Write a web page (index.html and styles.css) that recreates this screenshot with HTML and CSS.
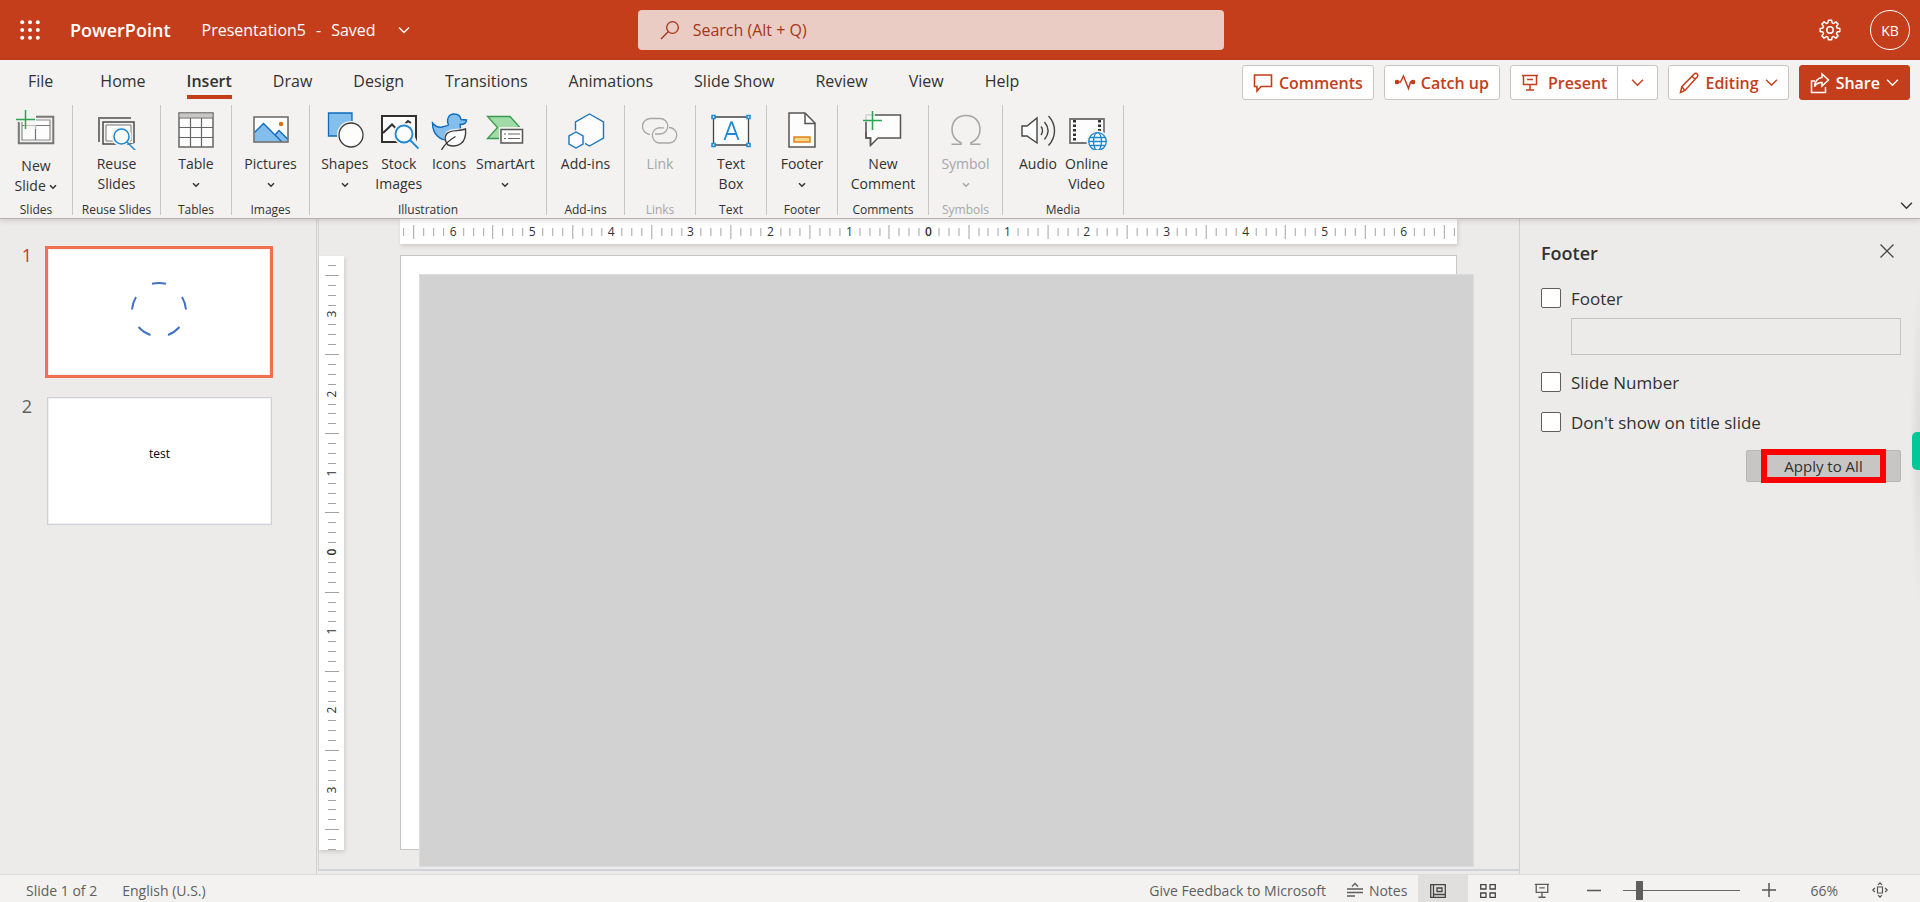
FILE: index.html
```html
<!DOCTYPE html>
<html lang="en">
<head>
<meta charset="utf-8">
<title>Presentation5 - PowerPoint</title>
<link rel="stylesheet" href="styles.css">
</head>
<body>
<svg class="defs" width="0" height="0" aria-hidden="true">
  <symbol id="chevron" viewBox="0 0 12 12"><path d="M1 3.5l5 5 5-5" fill="none" stroke="currentColor" stroke-width="1.3"/></symbol>
  <symbol id="drop" viewBox="0 0 8 8"><path d="M1 2.2l3 3 3-3" fill="none" stroke="currentColor" stroke-width="1.5"/></symbol>
  <symbol id="screen" viewBox="0 0 18 18"><path d="M1 1.5h16M2.5 1.5v9h13v-9M6 5.5h6M9 10.5v5M5 16h8" fill="none" stroke="currentColor" stroke-width="1.5"/></symbol>
</svg>

<header class="titlebar">
  <div class="title-left">
    <button class="launcher" aria-label="App launcher">
      <svg width="20" height="20" viewBox="0 0 20 20" fill="#fff"><circle cx="2.2" cy="2.2" r="2"/><circle cx="10" cy="2.2" r="2"/><circle cx="17.8" cy="2.2" r="2"/><circle cx="2.2" cy="10" r="2"/><circle cx="10" cy="10" r="2"/><circle cx="17.8" cy="10" r="2"/><circle cx="2.2" cy="17.8" r="2"/><circle cx="10" cy="17.8" r="2"/><circle cx="17.8" cy="17.8" r="2"/></svg>
    </button>
    <a class="brand" href="#">PowerPoint</a>
    <button class="docname"><span>Presentation5</span><span>-</span><span>Saved</span><svg class="docname-chevron" width="12" height="12"><use href="#chevron"/></svg></button>
  </div>
  <label class="search">
    <svg width="20" height="20" viewBox="0 0 20 20" fill="none" stroke="#a4351a" stroke-width="1.3"><circle cx="12.5" cy="7.5" r="5.8"/><path d="M8.2 11.8L1 19"/></svg>
    <input type="search" placeholder="Search (Alt + Q)" aria-label="Search">
  </label>
  <div class="account">
    <button class="gear" aria-label="Settings">
      <svg width="22" height="22" viewBox="0 0 22 22" fill="none" stroke="#fff" stroke-width="1.5" stroke-linejoin="round"><path d="M9.4 1.2h3.2l.5 2.7 1.5.6 2.3-1.6 2.2 2.2-1.6 2.3.6 1.5 2.7.5v3.2l-2.7.5-.6 1.5 1.6 2.3-2.2 2.2-2.3-1.6-1.5.6-.5 2.7H9.4l-.5-2.7-1.5-.6-2.3 1.6-2.2-2.2 1.6-2.3-.6-1.5-2.7-.5V9.4l2.7-.5.6-1.5-1.6-2.3 2.2-2.2 2.3 1.6 1.5-.6z"/><circle cx="11" cy="11" r="3.2"/></svg>
    </button>
    <button class="avatar">KB</button>
  </div>
</header>

<section class="ribbon">
  <div class="tabrow">
    <nav class="tabs">
      <a class="tab tab-file" href="#">File</a><a class="tab" href="#">Home</a><a class="tab active" href="#">Insert</a><a class="tab" href="#">Draw</a><a class="tab" href="#">Design</a><a class="tab" href="#">Transitions</a><a class="tab" href="#">Animations</a><a class="tab" href="#">Slide Show</a><a class="tab" href="#">Review</a><a class="tab" href="#">View</a><a class="tab" href="#">Help</a>
    </nav>
    <div class="actions">
      <button class="action"><svg width="20" height="20" viewBox="0 0 20 20" fill="none" stroke="currentColor" stroke-width="1.6"><path d="M1.5 2h17v11.500H8l-4 4.500v-4.500H1.500z"/></svg>Comments</button>
      <button class="action"><svg width="20" height="20" viewBox="0 0 20 20" fill="none" stroke="currentColor" stroke-width="1.500"><path d="M2 9h3.500l3-6 5 12.500L15.500 9H18"/><circle cx="2" cy="9" r="1.600" fill="currentColor"/><circle cx="18" cy="9" r="1.600" fill="currentColor"/></svg>Catch up</button>
      <div class="split">
        <button class="action split-main"><svg width="18" height="18"><use href="#screen"/></svg>Present</button>
        <button class="action split-more" aria-label="Present options"><svg width="13" height="13"><use href="#chevron"/></svg></button>
      </div>
      <button class="action"><svg width="20" height="22" viewBox="0 0 20 22" fill="none" stroke="currentColor" stroke-width="1.500"><path d="M1.500 20.500l1.300-5.800L15.200 2c1-1 2.300-.8 3 0s.8 2-.1 3L6 18.500zM13 4.300l3.300 3.200M2.800 14.700L6 18.500"/></svg>Editing<svg width="13" height="13"><use href="#chevron"/></svg></button>
      <button class="action share"><svg width="20" height="22" viewBox="0 0 20 22" fill="none" stroke="currentColor" stroke-width="1.500"><path d="M5 9H1.500v11.500h14V15M12 2l6.500 6L12 14v-3.500c-4 0-6 1.500-7.500 4C5 9 8 6 12 5.500z"/></svg>Share<svg width="13" height="13"><use href="#chevron"/></svg></button>
    </div>
  </div>

  <div class="tools">
    <div class="group w72"><div class="items">
      <button class="tool low"><svg width="40" height="40" viewBox="0 0 40 40" fill="none"><path d="M2.800 12v21.300h34.500V6.800H20" stroke="#767676" stroke-width="2"/><path d="M6 12v18h28V10H20" fill="#fdfdfd" stroke="#8a8a8a" stroke-width="1.200"/><path d="M6 15.500h28M19.500 15.500V30" stroke="#767676" stroke-width="1.200"/><path d="M0 5h20v14H8V9H0z" fill="#f3f2f1" opacity=".6"/><path d="M9.500 0v19M0 9.500h19" stroke="#2ea44f" stroke-width="1.500"/></svg><span>New<br>Slide <svg width="8" height="8"><use href="#drop"/></svg></span></button>
    </div><span class="caption">Slides</span></div>

    <div class="group w89"><div class="items">
      <button class="tool"><svg width="40" height="40" viewBox="0 0 40 40" fill="none"><path d="M2 32V8h32" stroke="#767676" stroke-width="2"/><path d="M6 12h31v22H6z" stroke="#4a4a4a" stroke-width="1.500"/><path d="M9 15h25v16H9z" fill="#fdfdfd" stroke="#767676"/><circle cx="24.500" cy="26.500" r="10" fill="#f3f2f1"/><path d="M28 36l10-3 2 7z" fill="#f3f2f1"/><circle cx="24.500" cy="26.500" r="7.500" fill="#fdfdfd" stroke="#1e88d2" stroke-width="1.500"/><path d="M30 32l8.500 8.500" stroke="#1e88d2" stroke-width="1.500"/></svg><span>Reuse<br>Slides</span></button>
    </div><span class="caption">Reuse Slides</span></div>

    <div class="group w71"><div class="items">
      <button class="tool"><svg width="40" height="40" viewBox="0 0 40 40" fill="none" stroke="#666"><path d="M3 3h34v34H3z" fill="#fdfdfd" stroke-width="1.500"/><path d="M3.500 3.500h33v4h-33z" fill="#c8c6c4" stroke="none"/><path d="M3 8h34M3 17.500h34M3 27.500h34M14.500 8v29M25.500 8v29" stroke-width="1.200"/></svg><span>Table</span><svg class="drop" width="8" height="8"><use href="#drop"/></svg></button>
    </div><span class="caption">Tables</span></div>

    <div class="group w78"><div class="items">
      <button class="tool"><svg width="40" height="40" viewBox="0 0 40 40" fill="none"><path d="M3 7h34v25H3z" fill="#fdfdfd"/><path d="M3.500 22.500L12.500 13.500l18 18h-27z" fill="#83beec"/><path d="M36.500 28v3.500h-6L24 25l4-4.500z" fill="#83beec"/><path d="M3.500 22.500l9-9L30.500 31.500M24 25l4-4.500 8.500 8.500" stroke="#0f6cbd" stroke-width="1.400"/><path d="M3 7h34v25H3z" stroke="#666" stroke-width="1.500"/><circle cx="30" cy="14" r="2.200" fill="#e06c00"/></svg><span>Pictures</span><svg class="drop" width="8" height="8"><use href="#drop"/></svg></button>
    </div><span class="caption">Images</span></div>

    <div class="group w237"><div class="items">
      <button class="tool"><svg width="40" height="40" viewBox="0 0 40 40" fill="none"><path d="M3.500 3h23.500v23H3.500z" fill="#83beec" stroke="#0f6cbd" stroke-width="1.300"/><circle cx="26" cy="25" r="14" fill="#f3f2f1"/><circle cx="26" cy="25" r="12" fill="#fdfdfd" stroke="#3b3a39" stroke-width="1.300"/></svg><span>Shapes</span><svg class="drop" width="8" height="8"><use href="#drop"/></svg></button>
      <button class="tool"><svg width="40" height="40" viewBox="0 0 40 40" fill="none"><path d="M3 6h34v26H3z" fill="#fdfdfd" stroke="#323130" stroke-width="2"/><path d="M4 23l9-8.500 5 5M26 14l3-3 3 2" stroke="#323130" stroke-width="2"/><circle cx="25" cy="24" r="11" fill="#f3f2f1"/><path d="M28 34l8-7 4 9z" fill="#f3f2f1"/><circle cx="25" cy="24" r="8.500" fill="#fdfdfd" stroke="#1e88d2" stroke-width="1.800"/><path d="M31 30l8.500 8.500" stroke="#1e88d2" stroke-width="1.800"/></svg><span>Stock<br>Images</span></button>
      <button class="tool"><svg width="40" height="40" viewBox="0 0 40 40" fill="none"><path d="M3.500 13c3 3.500 6 5 9.500 4 3-1 6-1 6.500-2C17 9 20 4 25 4c4 0 6.500 2 7 5.500l5.500.5c0 3-2 4.500-6.500 4.500 2 9-2 16-11 16-9 0-16.500-6-16.500-17.500z" fill="#83beec" stroke="#0f6cbd" stroke-width="1.400"/><path d="M38 17c-8 3-19 0-22 7-2 4 0 7 1 8l-6 8h6l5-3c10 2 17-4 16-20z" fill="#f3f2f1"/><path d="M36.500 19c-7 3-15 0-19 5-2.500 3.500-1 8 1.500 11 9 3 19-1 17.500-16z" fill="#fdfdfd" stroke="#3b3a39" stroke-width="1.400"/><path d="M12.500 40c3-6 8-10 14-13.500" stroke="#3b3a39" stroke-width="1.400"/></svg><span>Icons</span></button>
      <button class="tool"><svg width="40" height="40" viewBox="0 0 40 40" fill="none"><path d="M2.500 6.500H25l10 11-10 11H2.500l10-11z" fill="#a0dba8" stroke="#3a9a4c" stroke-width="1.300"/><path d="M14 17h26v18H14z" fill="#f3f2f1"/><path d="M16 19.500h21.500v13.500H16z" fill="#fdfdfd" stroke="#555" stroke-width="1.500"/><path d="M19 24h2M23 24h12M19 28.500h2M23 28.500h12" stroke="#666" stroke-width="1.200"/></svg><span>SmartArt</span><svg class="drop" width="8" height="8"><use href="#drop"/></svg></button>
    </div><span class="caption">Illustration</span></div>

    <div class="group w78"><div class="items">
      <button class="tool"><svg width="40" height="40" viewBox="0 0 40 40" fill="#fdfdfd" stroke="#1e73be" stroke-width="1.400"><path d="M23.500 4l14 8v16l-14 8-14-8V12z"/><path d="M10 20l9 5v10l-9 5-9-5V25z" fill="#f3f2f1" stroke="none"/><path d="M10 22l7 4v8l-7 4-7-4v-8z"/></svg><span>Add-ins</span></button>
    </div><span class="caption">Add-ins</span></div>

    <div class="group w71"><div class="items">
      <button class="tool" disabled><svg width="40" height="40" viewBox="0 0 40 40" fill="none" stroke="#a6a6a6" stroke-width="1.300"><path d="M10 24.500a8 8 0 0 1 1-16h9a7.500 7.500 0 1 1 0 15.500h-5"/><path d="M29 17.500a7.500 7.500 0 0 1 0 15.500h-10a7.500 7.500 0 1 1 2-15.200h3"/></svg><span>Link</span></button>
    </div><span class="caption muted">Links</span></div>

    <div class="group w71"><div class="items">
      <button class="tool"><svg width="40" height="40" viewBox="0 0 40 40" fill="none"><path d="M2.500 7h35v28h-35z" fill="#fdfdfd" stroke="#444" stroke-width="1.300"/><path d="M13.500 30L20 12.500h1L27.500 30M15.500 24h10" stroke="#1e88d2" stroke-width="1.800"/><g fill="#fdfdfd" stroke="#1e88d2" stroke-width="1.500"><path d="M1 5.500h3v3H1zM36 5.500h3v3h-3zM1 33.500h3v3H1zM36 33.500h3v3h-3z"/></g></svg><span>Text<br>Box</span></button>
    </div><span class="caption">Text</span></div>

    <div class="group w71"><div class="items">
      <button class="tool"><svg width="40" height="40" viewBox="0 0 40 40" fill="none"><path d="M7 3h16l10 10v24H7z" fill="#fdfdfd" stroke="#555" stroke-width="1.500"/><path d="M23 3v10.500h10" stroke="#555" stroke-width="1.500"/><path d="M12 27h16v5H12z" fill="#fbd98a" stroke="#e68019" stroke-width="1.500"/></svg><span>Footer</span><svg class="drop" width="8" height="8"><use href="#drop"/></svg></button>
    </div><span class="caption">Footer</span></div>

    <div class="group w91"><div class="items">
      <button class="tool"><svg width="40" height="40" viewBox="0 0 40 40" fill="none"><path d="M3 5h34.500v23H15l-7.500 7.500V28H3z" fill="#fdfdfd" stroke="#555" stroke-width="1.500"/><path d="M0 2h12v6h0v14H0z" fill="#f3f2f1" opacity=".8"/><path d="M3 12v16h4.500v7.500" stroke="#555" stroke-width="1.500"/><path d="M9.500 1v19M0 10.500h19" stroke="#2ea44f" stroke-width="1.500"/></svg><span>New<br>Comment</span></button>
    </div><span class="caption">Comments</span></div>

    <div class="group w74"><div class="items">
      <button class="tool" disabled><svg width="40" height="40" viewBox="0 0 40 40" fill="none" stroke="#a6a6a6" stroke-width="1.600"><path d="M5.500 34.300H15v-1.500C9 30 6 25.500 6 19.500 6 11 11.500 5.500 20 5.500S34 11 34 19.500c0 6-3 10.500-9 13.300v1.500h9.500"/></svg><span>Symbol</span><svg class="drop" width="8" height="8"><use href="#drop"/></svg></button>
    </div><span class="caption muted">Symbols</span></div>

    <div class="group w120"><div class="items">
      <button class="tool"><svg width="40" height="40" viewBox="0 0 40 40" fill="none" stroke="#444" stroke-width="1.400"><path d="M4 16h5l10-8v25L9 26H4z" fill="#fdfdfd"/><path d="M23 16.500c2 2.500 2 5.500 0 8.500M26.500 12c4.500 5.500 4.500 12 0 17.500M30.500 6c8 8.500 8 21 0 29.500"/></svg><span>Audio</span></button>
      <button class="tool"><svg width="40" height="40" viewBox="0 0 40 40" fill="none"><path d="M3 9h34v24H3z" fill="#fdfdfd" stroke="#767676" stroke-width="1.800"/><path d="M7.500 10v22M32.500 10v22" stroke="#323130" stroke-width="3" stroke-dasharray="2.500 2"/><circle cx="30.500" cy="31.500" r="11" fill="#f3f2f1"/><g stroke="#1e88d2" stroke-width="1.300"><circle cx="30.500" cy="31.500" r="8.800" fill="#fdfdfd"/><ellipse cx="30.500" cy="31.500" rx="4" ry="8.800"/><path d="M21.700 31.500h17.600M23 27.500h15M23 35.500h15"/></g></svg><span>Online<br>Video</span></button>
    </div><span class="caption">Media</span></div>
    <button class="collapse" aria-label="Collapse ribbon"><svg width="13" height="13"><use href="#chevron"/></svg></button>
  </div>
</section>

<main class="workspace">
  <aside class="thumbs">
    <div class="thumb-row"><span class="thumb-no current">1</span>
      <button class="thumb selected" aria-label="Slide 1"><svg width="64" height="64" viewBox="0 0 64 64" fill="none" stroke="#4472c4" stroke-width="2"><path d="M25 5.800q7-1.500 14 0M9 19q-3.500 6-4 12.500M55 19q3.500 6 4 12.500M11.500 49q5 5.500 12 8M52.500 49q-5 5.500-11.500 8"/></svg></button>
    </div>
    <div class="thumb-row"><span class="thumb-no">2</span><button class="thumb">test</button></div>
  </aside>
  <div class="editor">
    <div class="vruler"><svg id="vruler" viewBox="0 0 25 594"></svg></div>
    <div class="stage">
      <div class="hruler"><svg id="hruler" viewBox="0 0 1056 25"></svg></div>
      <div class="slide"><div class="placeholder"></div></div>
    </div>
  </div>
  <aside class="pane">
    <div class="pane-head"><h2>Footer</h2><button class="close" aria-label="Close"><svg width="14" height="14" viewBox="0 0 14 14"><path d="M.5.500l13 13M13.500.500l-13 13" stroke="#444" stroke-width="1.300"/></svg></button></div>
    <label class="check"><input type="checkbox">Footer</label>
    <input class="footer-text" type="text" aria-label="Footer text">
    <label class="check"><input type="checkbox">Slide Number</label>
    <label class="check last"><input type="checkbox">Don't show on title slide</label>
    <button class="apply"><span>Apply to All</span></button>
    <div class="edge-shade"></div>
    <div class="edge-tab"></div>
  </aside>
</main>

<footer class="status">
  <button>Slide 1 of 2</button>
  <button class="lang">English (U.S.)</button>
  <div class="status-right">
    <a href="#">Give Feedback to Microsoft</a>
    <button class="notes"><svg width="16" height="16" viewBox="0 0 16 16" fill="none" stroke="#605e5c" stroke-width="1.400"><path d="M5 4.500l3-3 3 3M0 7h16M0 10.500h16M0 14h8"/></svg>Notes</button>
    <button class="view on" aria-label="Normal view"><svg width="16" height="14" viewBox="0 0 16 14" fill="none" stroke="#444" stroke-width="1.300"><path d="M.700.700h14.600v12.600H.700zM3.500.700v12.600M3.500 10.500h12M7 4h5v3.500H7z"/></svg></button>
    <button class="view" aria-label="Slide sorter"><svg width="16" height="14" viewBox="0 0 16 14" fill="none" stroke="#444" stroke-width="1.300"><path d="M.700.700h5.300v4.300H.700zM10 .700h5.300v4.300H10zM.700 9h5.300v4.300H.700zM10 9h5.300v4.300H10z"/></svg></button>
    <button class="view show" aria-label="Slide show"><svg width="16" height="16"><use href="#screen"/></svg></button>
    <button class="zoom-btn" aria-label="Zoom out"><svg width="14" height="14"><path d="M0 7.500h14" stroke="#555" stroke-width="1.500"/></svg></button>
    <input class="zoom" type="range" min="10" max="400" value="54" aria-label="Zoom">
    <button class="zoom-btn" aria-label="Zoom in"><svg width="14" height="14"><path d="M0 7h14M7 0v14" stroke="#555" stroke-width="1.500"/></svg></button>
    <button class="percent">66%</button>
    <button class="fit" aria-label="Fit to window"><svg width="16" height="16" viewBox="0 0 16 16" fill="none" stroke="#555" stroke-width="1.200"><path d="M5.500 5h5v6h-5zM6 2.800l2-2 2 2M6 13.200l2 2 2-2M2.800 6l-2 2 2 2M13.200 6l2 2-2 2"/></svg></button>
  </div>
</footer>
<script src="ruler.js"></script>
</body>
</html>
```
FILE: styles.css
```css
* { box-sizing: border-box; }
body {
  margin: 0;
  height: 100vh;
  display: flex;
  flex-direction: column;
  overflow: hidden;
  font-family: "Open Sans", "Noto Sans", sans-serif;
  font-size: 14px;
  color: #323130;
  background: #ecebe9;
}
button, input { font: inherit; color: inherit; }
button { border: 0; padding: 0; background: none; white-space: nowrap; }
a { color: inherit; text-decoration: none; }
svg { display: block; flex: none; }
.defs { position: absolute; }

.titlebar {
  flex: none;
  display: grid;
  grid-template-columns: 9fr minmax(200px, 586px) 10fr;
  align-items: center;
  height: 60px;
  padding: 0 10px 0 20px;
  background: #c43e1c;
  color: #fff;
}
.title-left { display: flex; align-items: center; }
.brand { margin-left: 30px; font-size: 18px; font-weight: 600; }
.docname { display: flex; align-items: center; gap: 10px; margin-left: 31px; font-size: 16px; }
.docname-chevron { margin-left: 12px; }
.search {
  display: flex;
  align-items: center;
  gap: 13px;
  height: 40px;
  padding: 0 22px;
  border-radius: 4px;
  background: #eaccc4;
  color: #a4351a;
}
.search input { flex: 1; min-width: 0; padding: 0; border: 0; outline: 0; background: none; font-size: 16px; }
.search input::placeholder { color: #a4351a; opacity: 1; }
.account { display: flex; justify-content: flex-end; align-items: center; gap: 29px; }
.avatar { width: 40px; height: 40px; border: 1px solid #fff; border-radius: 50%; font-size: 14px; }

.ribbon {
  position: relative;
  z-index: 2;
  flex: none;
  background: #f3f2f1;
  border-bottom: 1px solid #b3b0ad;
  box-shadow: 0 1px 6px rgba(0, 0, 0, .16);
}
.tabrow { display: flex; justify-content: space-between; height: 45px; padding: 5px 10px 0 28px; }
.tabs { display: flex; gap: 41px; font-size: 16px; }
.tab { height: 34px; line-height: 32px; white-space: nowrap; }
.tab-file { margin-right: 6px; }
.tab.active { font-weight: 600; border-bottom: 4px solid #c43e1c; }
.actions { display: flex; gap: 10px; }
.action {
  display: flex;
  align-items: center;
  gap: 6px;
  height: 35px;
  padding: 0 10px;
  border: 1px solid #c8c6c4;
  border-radius: 3px;
  background: #fff;
  color: #c43e1c;
  font-size: 16px;
  font-weight: 600;
}
.split { display: flex; }
.split-main { gap: 9px; border-radius: 3px 0 0 3px; }
.split-more { width: 40px; justify-content: center; border-left: 0; border-radius: 0 3px 3px 0; }
.share { border-color: #c43e1c; background: #c43e1c; color: #fff; }

.tools { position: relative; display: flex; height: 113px; padding-bottom: 3px; }
.group {
  display: flex;
  flex-direction: column;
  justify-content: space-between;
  align-items: center;
  flex: none;
  padding-top: 5px;
  border-right: 1px solid #c8c6c4;
}
.w71 { width: 71px; }
.w72 { width: 73px; }
.w74 { width: 74px; }
.w78 { width: 78px; }
.w89 { width: 88px; }
.w91 { width: 91px; }
.w120 { width: 121px; }
.w237 { width: 237px; }
.items { display: flex; gap: 7px; }
.tool { display: flex; flex-direction: column; align-items: center; gap: 4px; line-height: 20px; }
.tool.low { gap: 6px; }
.tool span svg { display: inline-block; vertical-align: middle; }
.tool .drop { margin-top: 3px; }
.tool:disabled { color: #a6a6a6; }
.caption { font-size: 12px; line-height: 10px; }
.muted { color: #a6a6a6; }
.collapse { position: absolute; right: 7px; bottom: 6px; }

.workspace { flex: 1; min-height: 0; display: flex; }
.thumbs {
  flex: none;
  width: 317px;
  padding: 27px 43px 0 21px;
  border-right: 1px solid #d2d0ce;
  display: flex;
  flex-direction: column;
  gap: 19px;
}
.thumb-row { display: flex; gap: 14px; align-items: flex-start; }
.thumb-no { width: 12px; font-size: 18px; line-height: 18px; text-align: center; color: #605e5c; }
.thumb-no.current { color: #c43e1c; }
.thumb {
  flex: 1;
  display: flex;
  align-items: center;
  justify-content: center;
  margin-right: 1px;
  aspect-ratio: 225 / 128;
  border: 1px solid #d0d0d8;
  padding-bottom: 16px;
  background: #fff;
  box-shadow: inset 0 0 0 1px #f0f0f0;
  color: #000;
  font-size: 12px;
}
.thumb.selected { margin: 0 0 0 -2px; aspect-ratio: 228 / 132; border: 3px solid #f0704f; padding-bottom: 4px; }

.editor {
  flex: 1;
  min-width: 0;
  display: flex;
  margin: 0 0 3px 1px;
  border-left: 1px solid #d2d4d8;
  border-bottom: 2px solid #d0d4d9;
}
.vruler { flex: none; width: 25px; padding-top: 37px; }
.vruler svg, .hruler svg { display: block; width: 100%; background: #fff; box-shadow: 1px 2px 4px rgba(0, 0, 0, .14); }
.stage { flex: 1; min-width: 0; display: flex; flex-direction: column; gap: 11px; padding: 0 62px 0 56px; }
.slide { position: relative; aspect-ratio: 1057 / 595; border: 1px solid #c6c6c6; background: #fff; }
.placeholder {
  position: absolute;
  left: 18px;
  top: 18px;
  width: 100%;
  height: 100%;
  border: 1px solid #dcdcdc;
  background: #d2d2d2;
}
.tick { stroke: #a3a3a3; stroke-width: 1; }
.ruler-no { font-size: 12px; fill: #323130; text-anchor: middle; }
.zero { font-weight: 600; }

.pane {
  position: relative;
  flex: none;
  width: 401px;
  padding: 22px 19px 0 21px;
  border-left: 1px solid #d2d0ce;
  display: flex;
  flex-direction: column;
}
.pane-head { display: flex; justify-content: space-between; align-items: center; height: 24px; padding-right: 7px; }
.pane h2 { margin: 0; font-size: 18px; font-weight: 600; }
.close { padding-bottom: 4px; }
.check { display: flex; align-items: center; gap: 10px; height: 20px; margin-top: 23px; font-size: 17px; font-weight: 500; }
.check input {
  appearance: none;
  width: 20px;
  height: 20px;
  margin: 0;
  border: 1px solid #605e5c;
  border-radius: 2px;
  background: #fff;
}
.footer-text { height: 37px; margin: 10px 0 -6px 30px; border: 1px solid #c4c2c0; background: none; }
.check.last { margin-top: 20px; }
.apply {
  align-self: flex-end;
  display: flex;
  justify-content: center;
  align-items: center;
  width: 155px;
  height: 32px;
  margin-top: 18px;
  border: 1px solid #b8b6b4;
  border-radius: 2px;
  background: #c8c6c4;
  font-size: 15px;
  font-weight: 500;
}
.apply span { flex: none; width: 125px; height: 34px; line-height: 22px; border: 6px solid #f00; }
.edge-shade {
  position: absolute;
  right: 0;
  top: 60px;
  width: 10px;
  height: 330px;
  background: radial-gradient(ellipse at right, rgba(0, 0, 0, .07), transparent 70%);
}
.edge-tab { position: absolute; right: 0; top: 213px; width: 8px; height: 38px; border-radius: 5px 0 0 5px; background: #00c897; }

.status {
  flex: none;
  display: flex;
  align-items: center;
  height: 28px;
  padding: 0 32px 0 26px;
  border-top: 1px solid #dddbd9;
  background: #f3f2f1;
  color: #605e5c;
}
.status > * { height: 100%; padding-top: 3px; }
.status .lang { margin-left: 25px; }
.status-right { display: flex; align-items: center; margin-left: auto; }
.notes { display: flex; align-items: center; gap: 6px; margin: 0 11px 0 21px; }
.view { align-self: stretch; display: flex; align-items: center; justify-content: center; width: 50px; margin-top: -3px; padding: 4px 10px 0 0; }
.view.on { background: #e1dfdd; }
.view.show { width: 54px; padding-right: 6px; }
.zoom-btn { margin: 0 22px 0 15px; }
.zoom { appearance: none; width: 117px; height: 20px; margin: 0; background: linear-gradient(#666, #666) center / 100% 1px no-repeat; }
.zoom::-webkit-slider-thumb { appearance: none; width: 7px; height: 19px; background: #605e5c; }
.zoom + .zoom-btn { margin: 0 34px 0 22px; }
.percent { margin-right: 34px; }
```
FILE: ruler.js
```js
const NS = "http://www.w3.org/2000/svg";

// Draws eighth-inch ticks and inch numbers outward from the ruler's centre.
function drawRuler(id, length, vertical) {
  const svg = document.getElementById(id);
  const inch = 79.2;
  const mid = length / 2;
  const count = Math.floor(mid / (inch / 8));
  for (let i = -count; i <= count; i++) {
    const pos = Math.round(mid + i * inch / 8);
    const node = document.createElementNS(NS, i % 8 ? "line" : "text");
    if (i % 8 === 0) {
      node.textContent = Math.abs(i / 8);
      node.setAttribute("class", i ? "ruler-no" : "ruler-no zero");
      node.setAttribute("transform", vertical ? `translate(17 ${pos - 1}) rotate(-90)` : `translate(${pos} 17)`);
    } else {
      const half = i % 4 === 0 ? 7 : 4;
      const c = vertical ? pos - 0.5 : pos + 0.5;
      const [x1, y1, x2, y2] = vertical ? [13 - half, c, 13 + half, c] : [c, 13 - half, c, 13 + half];
      Object.entries({ x1, y1, x2, y2, class: "tick" }).forEach(([k, v]) => node.setAttribute(k, v));
    }
    svg.append(node);
  }
}

drawRuler("hruler", 1056, false);
drawRuler("vruler", 594, true);
```
